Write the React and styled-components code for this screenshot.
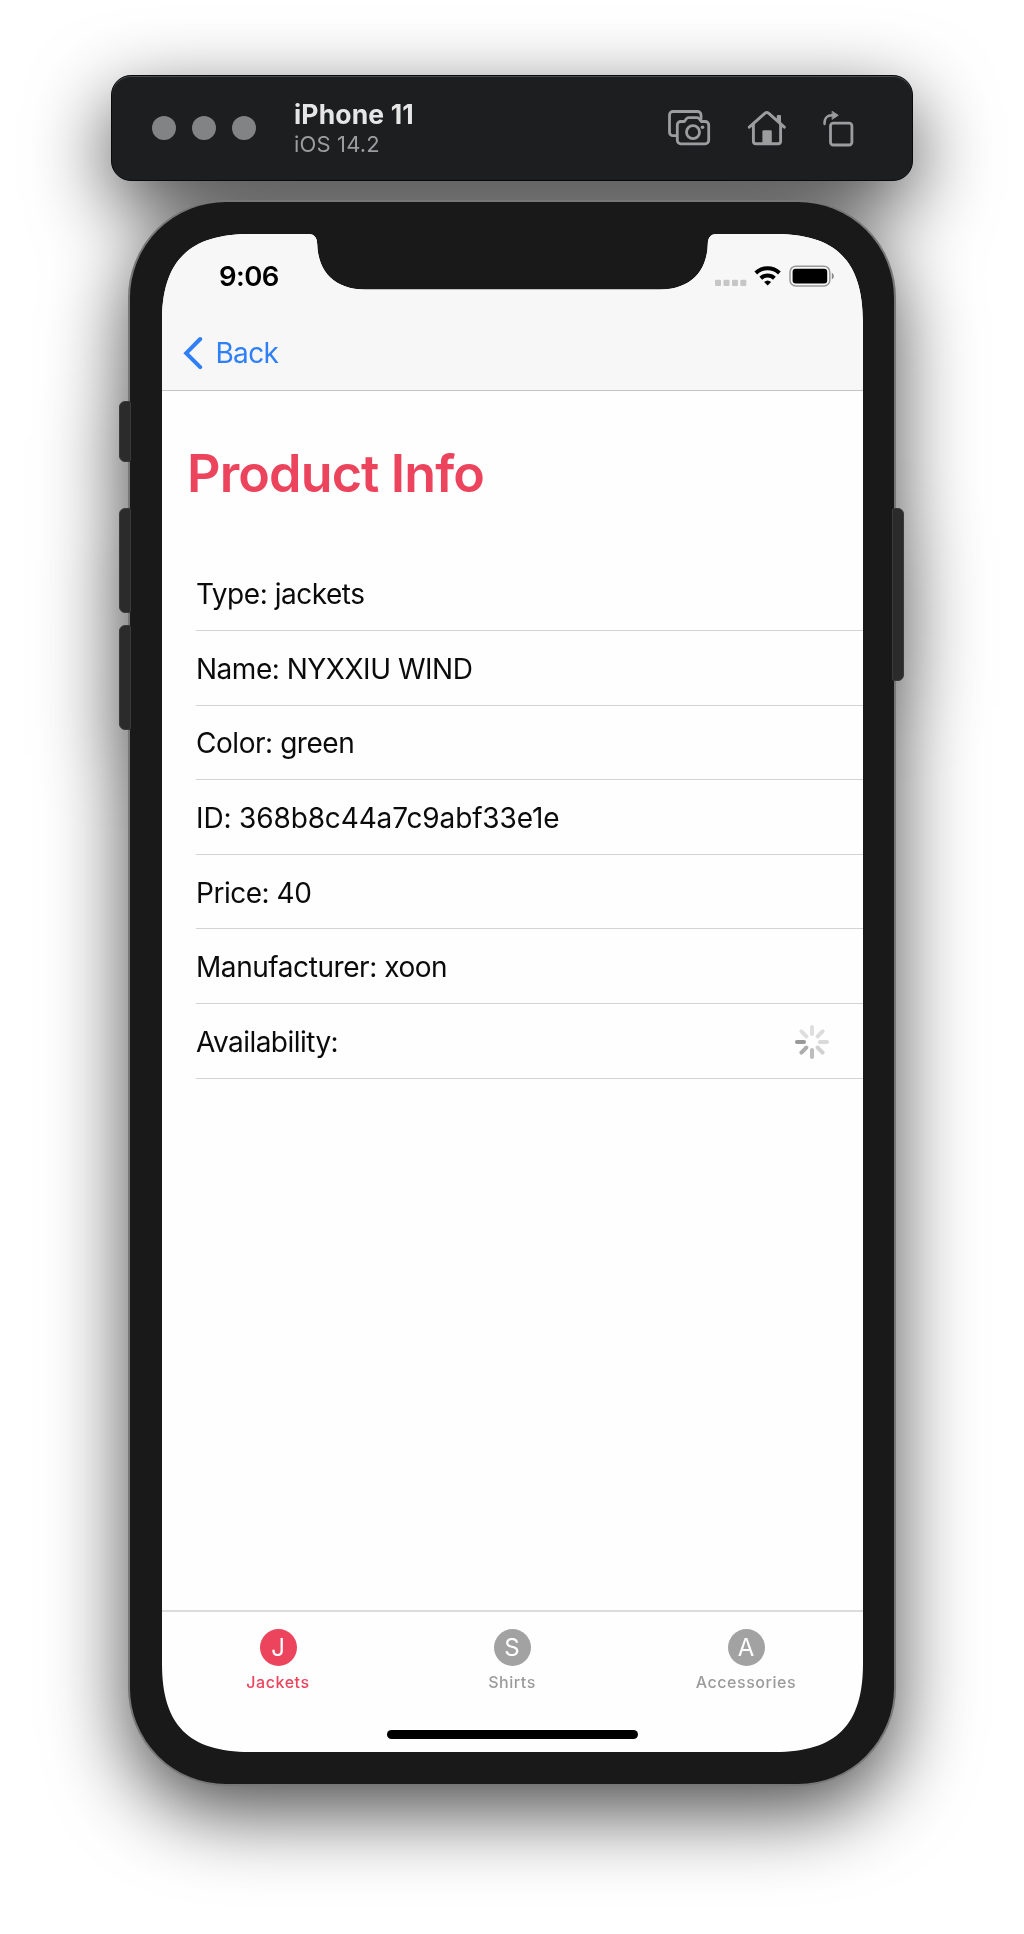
import React from "react";
import styled, { createGlobalStyle } from "styled-components";

const GlobalStyle = createGlobalStyle`
  *, *::before, *::after { box-sizing: border-box; }
  body { margin: 0; background: #fff; }
`;

const SCREEN_PATH =
  "M0 88 C0 27 27 0 88 0 H146 C152 0 155 3 155.2 10 C156 38 173 55.5 203 55.5 H498 C528 55.5 545 38 545.8 10 C546 3 549 0 555 0 H613 C674 0 701 27 701 88 V1430 C701 1491 674 1518 613 1518 H88 C27 1518 0 1491 0 1430 Z";

const Desktop = styled.main`
  display: flex;
  justify-content: center;
  width: 1024px;
  height: 1934px;
  padding-top: 75px;
  overflow: hidden;
  background: #fff;
  font-family: Inter, "Liberation Sans", sans-serif;
`;

const Simulator = styled.div`
  display: flex;
  flex-direction: column;
  align-items: center;
  gap: 18.5px;
  filter: drop-shadow(0 26px 40px rgba(0, 0, 0, 0.7));
`;

const Toolbar = styled.header`
  display: flex;
  align-items: center;
  width: 802px;
  height: 106px;
  padding: 0 58px 0 40px;
  border: 1px solid #08090a;
  border-radius: 20px;
  background: #1d1e20;
  box-shadow: inset 0 1px 0 #4b4c4e;
`;

const WindowDots = styled.div`
  display: flex;
  gap: 16px;
`;

const Dot = styled.span`
  width: 24px;
  height: 24px;
  border-radius: 50%;
  background: #828385;
`;

const DeviceLabel = styled.div`
  display: flex;
  flex-direction: column;
  flex: 1;
  padding: 1px 0 0 38px;
`;

const DeviceName = styled.strong`
  font-size: 26.5px;
  line-height: 31px;
  font-weight: 700;
  letter-spacing: 0.15px;
  color: #e6e6e7;
`;

const DeviceOs = styled.span`
  font-size: 22px;
  line-height: 28px;
  letter-spacing: 0.15px;
  color: #9b9c9e;
`;

const ToolbarActions = styled.div`
  display: flex;
  align-items: center;
  gap: 36px;
  color: #9c9d9f;

  svg {
    display: block;
    fill: none;
    stroke: currentColor;
    stroke-linecap: round;
    stroke-linejoin: round;
  }
`;

const Phone = styled.section`
  position: relative;
  width: 768px;
  height: 1586px;
  padding: 32.5px 31px 32px 32px;
  border: 2px solid #777;
  border-radius: 98px;
  background: #191919;
`;

const SideButton = styled.span`
  position: absolute;
  top: ${(p) => p.$top}px;
  ${(p) => (p.$side === "left" ? "left: -11px;" : "right: -10px;")}
  width: 12px;
  height: ${(p) => p.$height}px;
  border: 1px solid #3a3a3a;
  border-radius: ${(p) => (p.$side === "left" ? "6px 2px 2px 6px" : "2px 6px 6px 2px")};
  background: #2b2b2b;
`;

const Screen = styled.div`
  display: flex;
  flex-direction: column;
  width: 701px;
  height: 1518px;
  background: #fefefe;
  clip-path: path("${SCREEN_PATH}");
`;

const TopBar = styled.div`
  height: 157px;
  border-bottom: 1px solid #c4c4c4;
  background: #f7f7f7;
`;

const StatusBar = styled.div`
  display: flex;
  justify-content: space-between;
  height: 84px;
  padding: 25px 29px 0 57px;
`;

const Clock = styled.time`
  font-size: 27.5px;
  line-height: 34px;
  font-weight: 600;
  letter-spacing: -0.6px;
  color: #000;
`;

const StatusIcons = styled.div`
  display: flex;
  height: 34px;

  svg { display: block; }
`;

const BackButton = styled.button`
  display: flex;
  align-items: center;
  gap: 12.5px;
  height: 70px;
  padding: 0 0 0 21px;
  border: 0;
  background: none;
  font-family: inherit;
  font-size: 28px;
  letter-spacing: -0.7px;
  color: #2f7ff7;
`;

const Content = styled.div`
  flex: 1;
`;

const Title = styled.h1`
  margin: 0;
  padding: 51px 0 0 25px;
  height: 165.5px;
  font-size: 52px;
  line-height: 63px;
  font-weight: 600;
  letter-spacing: -0.87px;
  color: #ec445c;
`;

const InfoList = styled.ul`
  margin: 0;
  padding: 0 0 0 34px;
  list-style: none;
`;

const InfoRow = styled.li`
  display: flex;
  align-items: center;
  justify-content: space-between;
  height: 74.6px;
  padding: 2px 34px 0 0;
  border-bottom: 1px solid #d3d3d3;
  font-size: 28px;
  letter-spacing: ${(p) => p.$tracking}px;
  color: #0b0b0b;
`;

const TabBar = styled.nav`
  display: grid;
  grid-template-columns: repeat(3, 234px);
  justify-content: center;
  height: 120px;
  padding-right: 1px;
  border-top: 2px solid #dcdcdc;
`;

const Tab = styled.a`
  display: flex;
  flex-direction: column;
  align-items: center;
  gap: 6px;
  padding-top: 17px;
  font-size: 16px;
  line-height: 20px;
  font-weight: 500;
  letter-spacing: 0.55px;
  color: ${(p) => (p.$active ? "#ec445c" : "#9b9b9b")};
`;

const TabBadge = styled.span`
  display: flex;
  align-items: center;
  justify-content: center;
  width: 37px;
  height: 37px;
  border-radius: 50%;
  background: ${(p) => (p.$active ? "#ec445c" : "#a2a2a2")};
  font-size: 24px;
  font-weight: 400;
  letter-spacing: 0;
  color: #fff;
`;

const HomeArea = styled.div`
  display: flex;
  justify-content: center;
  height: 22px;
`;

const HomeIndicator = styled.span`
  width: 251px;
  height: 8.5px;
  border-radius: 5px;
  background: #000;
`;

const ScreenshotIcon = () => (
  <svg width="43" height="36" viewBox="0 0 43 36" strokeWidth="2.8">
    <path d="M8.6 25.7H5A3.5 3.5 0 0 1 1.5 22.2V5A3.5 3.5 0 0 1 5 1.5H29.5A3.5 3.5 0 0 1 33 5V9" />
    <path d="M12.8 11.5H16.4L18.4 8.7Q19.2 7.6 20.6 7.6H29Q30.4 7.6 31.2 8.7L33.2 11.5H37.2A3.5 3.5 0 0 1 40.7 15V30.3A3.5 3.5 0 0 1 37.2 33.8H12.8A3.5 3.5 0 0 1 9.3 30.3V15A3.5 3.5 0 0 1 12.8 11.5Z" />
    <circle cx="25" cy="22.2" r="6.5" />
    <circle cx="34.5" cy="17.3" r="1.8" fill="currentColor" stroke="none" />
  </svg>
);

const HomeIcon = () => (
  <svg width="40" height="36" viewBox="0 0 40 36" strokeWidth="2.9">
    <path d="M2.3 17.2 18.1 3.1Q19.8 1.7 21.5 3.1L37.3 17.2" />
    <path d="M6.4 14V31.2Q6.4 33.8 9 33.8H31Q33.6 33.8 33.6 31.2V14" />
    <path d="M29.8 6Q29.8 5 30.8 5H33Q34 5 34 6V14L29.8 10Z" fill="currentColor" stroke="none" />
    <path d="M15.4 21.5Q15.4 20.3 16.6 20.3H23.6Q24.8 20.3 24.8 21.5V33.8H15.4Z" fill="currentColor" stroke="none" />
  </svg>
);

const RotateIcon = () => (
  <svg width="31" height="37" viewBox="0 0 31 37" strokeWidth="2.8">
    <rect x="7.5" y="13.2" width="21.4" height="21.8" rx="2.8" />
    <path d="M1.5 14C1.2 8 4.3 5 9.5 5.2" strokeWidth="2.4" />
    <path d="M9.4 1.4 15.3 5.3 9.4 9.2Z" fill="currentColor" strokeWidth="0.8" />
  </svg>
);

const StatusGlyphs = () => (
  <svg width="121" height="34" viewBox="0 0 121 34">
    {[0, 8.5, 17, 25.3].map((x) => (
      <rect key={x} x={x + 2} y="20.8" width="6" height="6.2" rx="1.2" fill="#c6c6c6" />
    ))}
    <g fill="none" stroke="#000" strokeWidth="4">
      <path d="M42.8 14A17.2 17.2 0 0 1 66.4 14" />
      <path d="M47.8 19.2A9.8 9.8 0 0 1 61.4 19.2" />
    </g>
    <path d="M51.1 22.9Q54.6 19.9 58.1 22.9L54.6 26.5Z" fill="#000" />
    <rect x="77" y="7.2" width="39.8" height="19.8" rx="5.8" fill="#f7f7f7" stroke="#999" strokeWidth="1.5" />
    <rect x="79.6" y="9.8" width="34.6" height="14.6" rx="3" fill="#000" />
    <path d="M118.8 13.8Q120.8 14.8 120.8 17.2 120.8 19.6 118.8 20.6Z" fill="#888" />
  </svg>
);

const ChevronLeft = () => (
  <svg width="20" height="34" viewBox="0 0 20 34" fill="none" stroke="currentColor" strokeWidth="4" strokeLinecap="round">
    <path d="M17.2 3 3.2 17.2 17.2 31.2" strokeLinejoin="miter" />
  </svg>
);

const SPOKES = ["#dedede", "#dcdcdc", "#d9d9d9", "#d0d0d0", "#bdbdbd", "#acacac", "#999", "#dedede"];

const Spinner = () => (
  <svg width="34" height="34" viewBox="-17 -17 34 34" strokeWidth="4" strokeLinecap="round">
    {SPOKES.map((color, i) => {
      const a = (i * Math.PI) / 4;
      const rx = Math.sin(a);
      const ry = -Math.cos(a);
      return (
        <line key={i} x1={rx * 8} y1={ry * 8} x2={rx * 15} y2={ry * 15} stroke={color} />
      );
    })}
  </svg>
);

const ROWS = [
  { text: "Type: jackets", tracking: -0.47 },
  { text: "Name: NYXXIU WIND", tracking: -0.48 },
  { text: "Color: green", tracking: -0.45 },
  { text: "ID: 368b8c44a7c9abf33e1e", tracking: -0.14 },
  { text: "Price: 40", tracking: -0.47 },
  { text: "Manufacturer: xoon", tracking: -0.44 },
  { text: "Availability:", tracking: -0.53, loading: true },
];

const TABS = [
  { letter: "J", label: "Jackets", active: true },
  { letter: "S", label: "Shirts" },
  { letter: "A", label: "Accessories" },
];

export default function App() {
  return (
    <>
      <GlobalStyle />
      <Desktop>
        <Simulator>
          <Toolbar>
            <WindowDots>
              <Dot />
              <Dot />
              <Dot />
            </WindowDots>
            <DeviceLabel>
              <DeviceName>iPhone 11</DeviceName>
              <DeviceOs>iOS 14.2</DeviceOs>
            </DeviceLabel>
            <ToolbarActions>
              <ScreenshotIcon />
              <HomeIcon />
              <RotateIcon />
            </ToolbarActions>
          </Toolbar>
          <Phone>
            <SideButton $side="left" $top={199.5} $height={61} />
            <SideButton $side="left" $top={306.5} $height={105} />
            <SideButton $side="left" $top={423.5} $height={105} />
            <SideButton $side="right" $top={306.5} $height={173} />
            <Screen>
              <TopBar>
                <StatusBar>
                  <Clock>9:06</Clock>
                  <StatusIcons>
                    <StatusGlyphs />
                  </StatusIcons>
                </StatusBar>
                <BackButton>
                  <ChevronLeft />
                  Back
                </BackButton>
              </TopBar>
              <Content>
                <Title>Product Info</Title>
                <InfoList>
                  {ROWS.map((row) => (
                    <InfoRow key={row.text} $tracking={row.tracking}>
                      {row.text}
                      {row.loading && <Spinner />}
                    </InfoRow>
                  ))}
                </InfoList>
              </Content>
              <TabBar>
                {TABS.map((tab) => (
                  <Tab key={tab.label} $active={tab.active}>
                    <TabBadge $active={tab.active}>{tab.letter}</TabBadge>
                    {tab.label}
                  </Tab>
                ))}
              </TabBar>
              <HomeArea>
                <HomeIndicator />
              </HomeArea>
            </Screen>
          </Phone>
        </Simulator>
      </Desktop>
    </>
  );
}
